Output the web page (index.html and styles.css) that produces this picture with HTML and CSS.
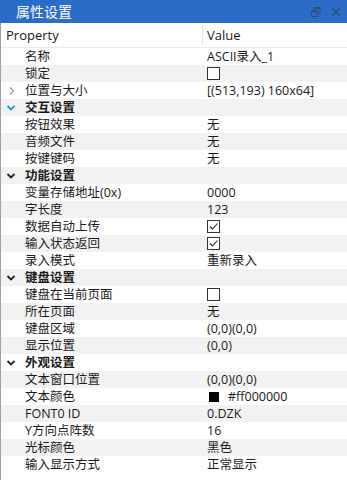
FILE: index.html
```html
<!DOCTYPE html>
<html>
<head>
<meta charset="utf-8">
<link rel="stylesheet" href="styles.css">
</head>
<body>
<div class="panel">
  <div class="titlebar">
    <span class="title">属性设置</span>
    <span class="tools">
      <svg class="ico" width="10" height="10" viewBox="0 0 10 10"><path d="M3 0.5h6v6h-2M0.5 3.5h6v6h-6z M3 0.5v3" fill="none" stroke="#2f4f7a" stroke-width="1.2"/><rect x="0.5" y="3.5" width="6" height="1.6" fill="#2f4f7a"/><rect x="3" y="0.5" width="6" height="1.6" fill="#2f4f7a"/></svg>
      <svg class="ico" width="10" height="10" viewBox="0 0 10 10"><path d="M1.5 1.5l7 7M8.5 1.5l-7 7" stroke="#2f4f7a" stroke-width="1.6"/></svg>
    </span>
  </div>
  <div class="header">
    <div class="hname">Property</div>
    <div class="hval">Value</div>
  </div>
  <div class="grid">
    <div class="row"><div class="name">名称</div><div class="val">ASCII录入_1</div></div>
    <div class="row"><div class="name">锁定</div><div class="val"><span class="cb"></span></div></div>
    <div class="row"><div class="name"><svg class="exp" width="8" height="10" viewBox="0 0 8 10"><path d="M2 1.5l3.5 3.5-3.5 3.5" fill="none" stroke="#9a9a9a" stroke-width="1.3"/></svg>位置与大小</div><div class="val">[(513,193) 160x64]</div></div>
    <div class="row cat"><div class="name"><svg class="chev" width="10" height="8" viewBox="0 0 10 8"><path d="M1.5 2l3.5 3.5 3.5-3.5" fill="none" stroke="#1e9bd7" stroke-width="1.8"/></svg>交互设置</div><div class="val"></div></div>
    <div class="row"><div class="name">按钮效果</div><div class="val">无</div></div>
    <div class="row"><div class="name">音频文件</div><div class="val">无</div></div>
    <div class="row"><div class="name">按键键码</div><div class="val">无</div></div>
    <div class="row cat"><div class="name"><svg class="chev" width="10" height="8" viewBox="0 0 10 8"><path d="M1.5 2l3.5 3.5 3.5-3.5" fill="none" stroke="#222" stroke-width="1.8"/></svg>功能设置</div><div class="val"></div></div>
    <div class="row"><div class="name">变量存储地址(0x)</div><div class="val">0000</div></div>
    <div class="row"><div class="name">字长度</div><div class="val">123</div></div>
    <div class="row"><div class="name">数据自动上传</div><div class="val"><span class="cb"><svg width="11" height="11" viewBox="0 0 11 11"><path d="M2 5.5l2.5 2.5 5-5.5" fill="none" stroke="#222" stroke-width="1.1"/></svg></span></div></div>
    <div class="row"><div class="name">输入状态返回</div><div class="val"><span class="cb"><svg width="11" height="11" viewBox="0 0 11 11"><path d="M2 5.5l2.5 2.5 5-5.5" fill="none" stroke="#222" stroke-width="1.1"/></svg></span></div></div>
    <div class="row"><div class="name">录入模式</div><div class="val">重新录入</div></div>
    <div class="row cat"><div class="name"><svg class="chev" width="10" height="8" viewBox="0 0 10 8"><path d="M1.5 2l3.5 3.5 3.5-3.5" fill="none" stroke="#222" stroke-width="1.8"/></svg>键盘设置</div><div class="val"></div></div>
    <div class="row"><div class="name">键盘在当前页面</div><div class="val"><span class="cb"></span></div></div>
    <div class="row"><div class="name">所在页面</div><div class="val">无</div></div>
    <div class="row"><div class="name">键盘区域</div><div class="val">(0,0)(0,0)</div></div>
    <div class="row"><div class="name">显示位置</div><div class="val">(0,0)</div></div>
    <div class="row cat"><div class="name"><svg class="chev" width="10" height="8" viewBox="0 0 10 8"><path d="M1.5 2l3.5 3.5 3.5-3.5" fill="none" stroke="#222" stroke-width="1.8"/></svg>外观设置</div><div class="val"></div></div>
    <div class="row"><div class="name">文本窗口位置</div><div class="val">(0,0)(0,0)</div></div>
    <div class="row"><div class="name">文本颜色</div><div class="val"><span class="sw"></span>#ff000000</div></div>
    <div class="row"><div class="name">FONT0 ID</div><div class="val">0.DZK</div></div>
    <div class="row"><div class="name">Y方向点阵数</div><div class="val">16</div></div>
    <div class="row"><div class="name">光标颜色</div><div class="val">黑色</div></div>
    <div class="row"><div class="name">输入显示方式</div><div class="val">正常显示</div></div>
  </div>
</div>
</body>
</html>
```
FILE: styles.css
```css
* { box-sizing: border-box; }
html, body { margin: 0; padding: 0; background: #fff; }
body {
  font-family: "Segoe UI", "Open Sans", "Noto Sans CJK SC", sans-serif;
  font-size: 12.5px;
  color: #1a1a1a;
  width: 347px;
  height: 480px;
  overflow: hidden;
}
.panel {
  height: 480px;
  border-left: 1px solid #a0a0a0;
  display: flex;
  flex-direction: column;
}
.titlebar {
  height: 23px;
  background: #2b6cc9;
  display: flex;
  align-items: center;
  justify-content: space-between;
  padding: 0 6px 0 16px;
  margin-left: -1px;
}
.title {
  color: #fff;
  font-family: "Noto Sans CJK SC", sans-serif;
  font-size: 14px;
  line-height: 23px;
}
.tools { display: flex; gap: 10px; align-items: center; }
.ico { display: block; }
.header {
  height: 25px;
  display: flex;
  align-items: center;
  font-size: 13px;
  border-bottom: 1px solid #ececec;
}
.hname { width: 202px; padding-left: 5px; border-right: 1px solid #e3e3e3; line-height: 20px; }
.hval { padding-left: 4px; line-height: 20px; }
.row {
  height: 17px;
  display: flex;
  align-items: center;
  line-height: 17px;
}
.row:nth-child(even) { background: #f2f2f2; }
.name {
  width: 203px;
  padding-left: 24px;
  position: relative;
  white-space: nowrap;
}
.val { padding-left: 3px; white-space: nowrap; display: flex; align-items: center; }
.cat .name { font-weight: bold; }
.chev { position: absolute; left: 5px; top: 5px; }
.exp { position: absolute; left: 7px; top: 4px; }
.cb {
  width: 13px; height: 13px;
  border: 1px solid #333;
  background: #fff;
  display: inline-flex;
  align-items: center;
  justify-content: center;
}
.sw {
  width: 10px; height: 10px;
  background: #000;
  display: inline-block;
  margin: 0 9px 0 2px;
}
```
